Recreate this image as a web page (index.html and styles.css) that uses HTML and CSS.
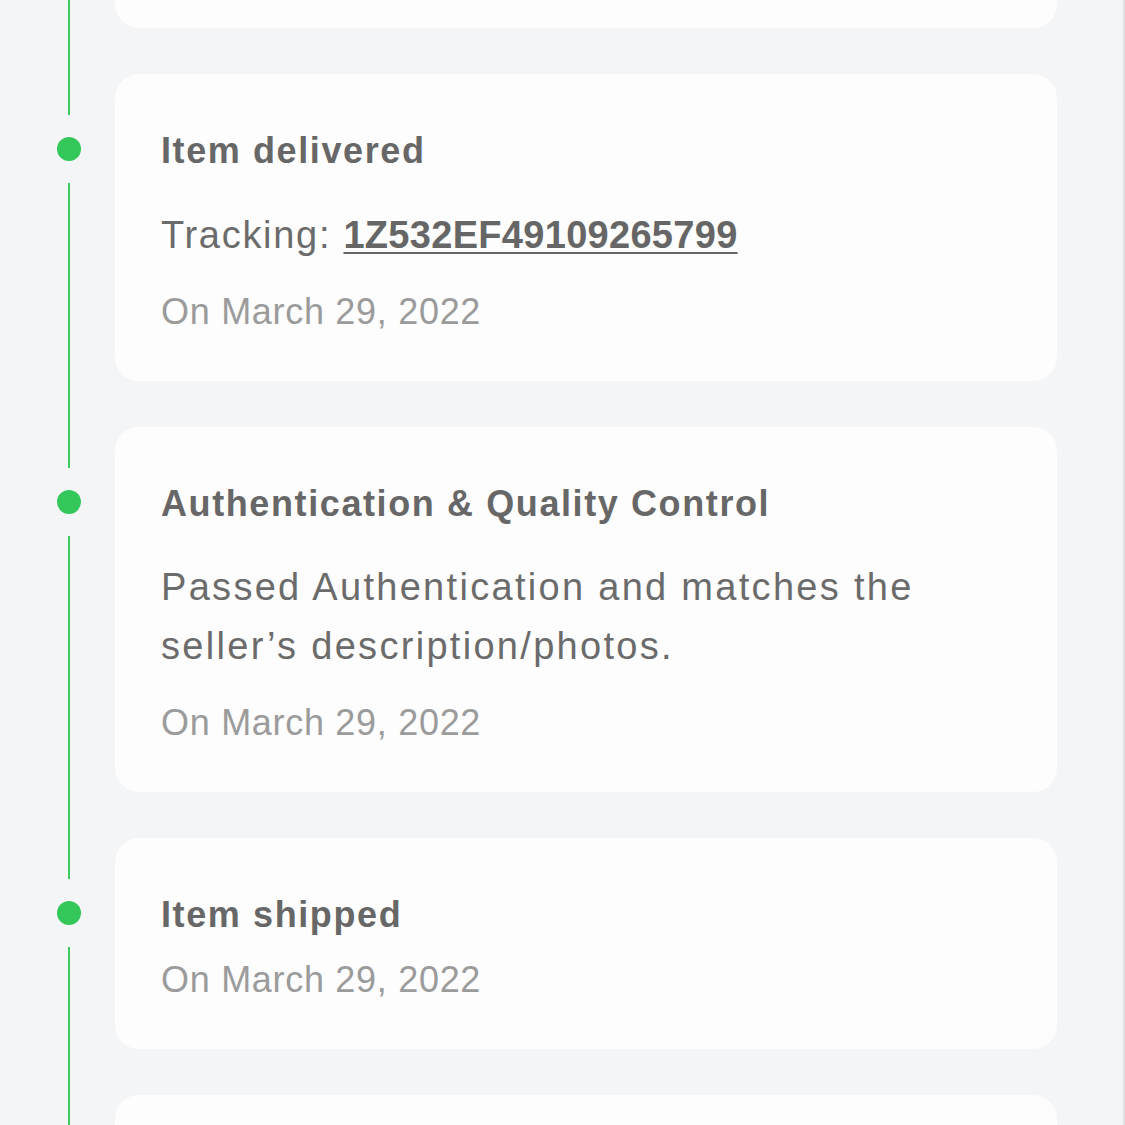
FILE: index.html
```html
<!DOCTYPE html>
<html lang="en">
<head>
<meta charset="utf-8">
<title>Order timeline</title>
<link rel="stylesheet" href="styles.css">
</head>
<body>
<div class="screen">
  <ol class="timeline">
    <li class="event">
      <div class="rail"><span class="seg seg--top"></span><span class="dot"></span><span class="seg seg--bottom"></span></div>
      <div class="card card--offscreen"></div>
    </li>
    <li class="event">
      <div class="rail"><span class="seg seg--top"></span><span class="dot"></span><span class="seg seg--bottom"></span></div>
      <div class="card">
        <h3 class="title">Item delivered</h3>
        <p class="body">Tracking: <a class="tracking" href="#">1Z532EF49109265799</a></p>
        <p class="date">On March 29, 2022</p>
      </div>
    </li>
    <li class="event">
      <div class="rail"><span class="seg seg--top"></span><span class="dot"></span><span class="seg seg--bottom"></span></div>
      <div class="card">
        <h3 class="title">Authentication &amp; Quality Control</h3>
        <p class="body body--wrap">Passed Authentication and matches the seller’s description/photos.</p>
        <p class="date">On March 29, 2022</p>
      </div>
    </li>
    <li class="event">
      <div class="rail"><span class="seg seg--top"></span><span class="dot"></span><span class="seg seg--bottom"></span></div>
      <div class="card">
        <h3 class="title">Item shipped</h3>
        <p class="date">On March 29, 2022</p>
      </div>
    </li>
    <li class="event">
      <div class="rail"><span class="seg seg--top"></span><span class="dot"></span><span class="seg seg--bottom"></span></div>
      <div class="card card--offscreen"></div>
    </li>
  </ol>
</div>
</body>
</html>
```

FILE: styles.css
```css
* { box-sizing: border-box; }

html, body {
  margin: 0;
  padding: 0;
  height: 100%;
  overflow: hidden;
  background: #f4f5f7;
}

.screen {
  width: 1125px;
  height: 1125px;
  overflow: hidden;
  border-right: 2px solid #e1e2e4;
  font-family: "Liberation Sans", Arial, sans-serif;
}

.timeline {
  list-style: none;
  margin: -172px 0 0 0;
  padding: 0;
}

.event {
  display: flex;
  align-items: stretch;
}

.rail {
  width: 24px;
  margin-left: 57px;
  margin-right: 34px;
  display: flex;
  flex-direction: column;
  align-items: center;
  flex: none;
}

.seg {
  width: 2px;
  background: #3dca60;
}

.seg--top { height: 41px; }

.seg--bottom { flex: 1; }

.dot {
  width: 24px;
  height: 24px;
  border-radius: 50%;
  background: #34c759;
  margin: 22px 0;
  flex: none;
}

.card {
  width: 942px;
  flex: none;
  display: flex;
  flex-direction: column;
  align-items: flex-start;
  background: #fdfdfd;
  border-radius: 24px;
  padding: 55px 46px 47px;
  margin-bottom: 46px;
}

.card--offscreen { height: 200px; }

.title {
  margin: 0 0 21px;
  font-size: 36px;
  line-height: 44px;
  font-weight: 700;
  letter-spacing: 1.6px;
  color: #676767;
}

.body {
  margin: 12px 0 25px;
  font-size: 38px;
  line-height: 59px;
  letter-spacing: 1.7px;
  color: #6b6b6b;
}

.body--wrap {
  max-width: 800px;
  margin-top: 11px;
  letter-spacing: 2.3px;
}

.tracking {
  color: #666;
  font-weight: 700;
  letter-spacing: 0.3px;
  text-decoration: underline;
  text-decoration-thickness: 2px;
  text-underline-offset: 4px;
}

.date {
  margin: 0;
  font-size: 36px;
  line-height: 44px;
  letter-spacing: 0.7px;
  color: #9b9b9b;
}
```
